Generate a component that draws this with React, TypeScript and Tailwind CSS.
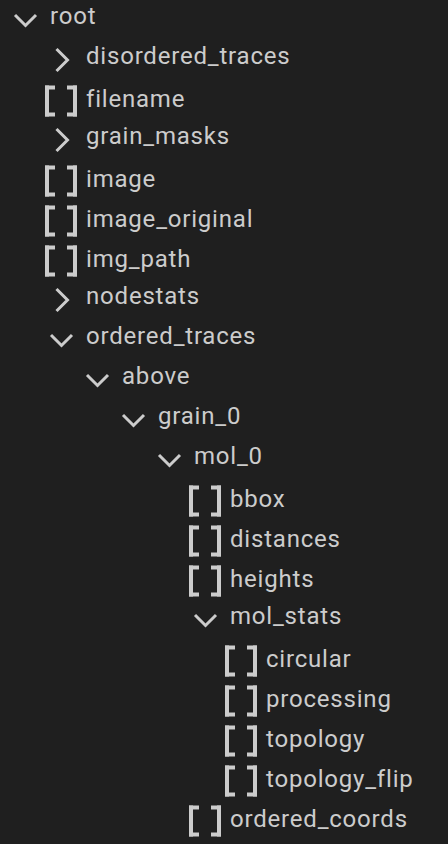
import React from "react";

type Node = { label: string; level: number; kind: "open" | "closed" | "leaf" };

const rows: Node[] = [
  { label: "root", level: 0, kind: "open" },
  { label: "disordered_traces", level: 1, kind: "closed" },
  { label: "filename", level: 1, kind: "leaf" },
  { label: "grain_masks", level: 1, kind: "closed" },
  { label: "image", level: 1, kind: "leaf" },
  { label: "image_original", level: 1, kind: "leaf" },
  { label: "img_path", level: 1, kind: "leaf" },
  { label: "nodestats", level: 1, kind: "closed" },
  { label: "ordered_traces", level: 1, kind: "open" },
  { label: "above", level: 2, kind: "open" },
  { label: "grain_0", level: 3, kind: "open" },
  { label: "mol_0", level: 4, kind: "open" },
  { label: "bbox", level: 5, kind: "leaf" },
  { label: "distances", level: 5, kind: "leaf" },
  { label: "heights", level: 5, kind: "leaf" },
  { label: "mol_stats", level: 5, kind: "open" },
  { label: "circular", level: 6, kind: "leaf" },
  { label: "processing", level: 6, kind: "leaf" },
  { label: "topology", level: 6, kind: "leaf" },
  { label: "topology_flip", level: 6, kind: "leaf" },
  { label: "ordered_coords", level: 5, kind: "leaf" },
];

function ChevronDown() {
  return (
    <svg width="24" height="32" viewBox="0 0 24 32" className="ml-[4px] mr-[13px] shrink-0 overflow-visible">
      <polyline points="2,15 12.5,25.5 23,15" fill="none" stroke="#cccccc" strokeWidth="3" />
    </svg>
  );
}

function ChevronRight() {
  return (
    <svg width="24" height="32" viewBox="0 0 24 32" className="ml-[4px] mr-[13px] shrink-0 overflow-visible">
      <polyline points="7.5,9 18.5,20 7.5,31" fill="none" stroke="#cccccc" strokeWidth="3" />
    </svg>
  );
}

function Brackets() {
  return (
    <svg width="32" height="32" viewBox="0 0 32 32" className="mt-[3px] mr-[9px] shrink-0">
      <g fill="#cccccc">
        <rect x="0" y="0.5" width="4" height="31" />
        <rect x="0" y="0.5" width="10" height="4" />
        <rect x="0" y="27.5" width="10" height="4" />
        <rect x="28" y="0.5" width="4" height="31" />
        <rect x="22" y="0.5" width="10" height="4" />
        <rect x="22" y="27.5" width="10" height="4" />
      </g>
    </svg>
  );
}

const indent = ["pl-[9px]", "pl-[45px]", "pl-[81px]", "pl-[117px]", "pl-[153px]", "pl-[189px]", "pl-[225px]"];

export default function App() {
  return (
    <div className="min-h-screen w-full bg-[#1f1f1f] text-[#cccccc] overflow-hidden" style={{ fontFamily: "Roboto, 'Noto Sans', sans-serif" }}>
      <div className="mt-[-4px] flex flex-col">
        {rows.map((r, i) => (
          <div
            key={i}
            className={`flex h-10 items-center ${indent[r.level]} ${r.kind === "leaf" ? "pt-[6px]" : ""}`}
          >
            {r.kind === "open" && <ChevronDown />}
            {r.kind === "closed" && <ChevronRight />}
            {r.kind === "leaf" && <Brackets />}
            <span className="text-[24px] leading-10 tracking-[0.8px] whitespace-nowrap">{r.label}</span>
          </div>
        ))}
      </div>
    </div>
  );
}
